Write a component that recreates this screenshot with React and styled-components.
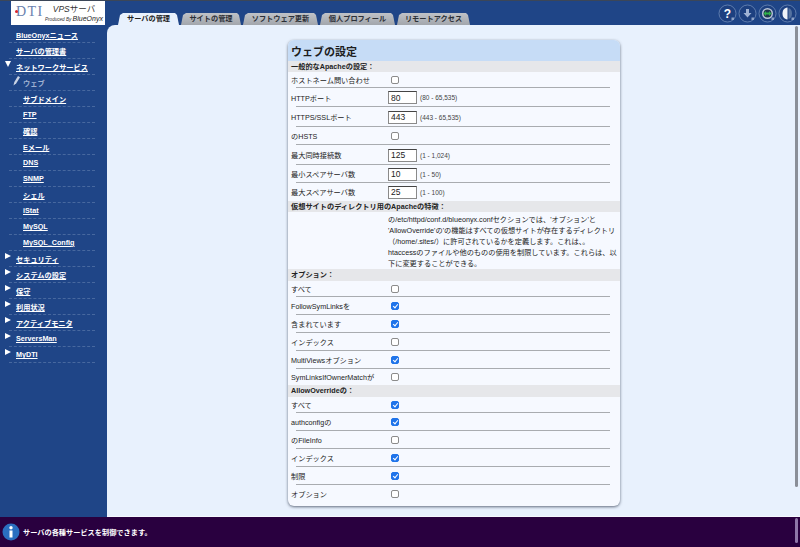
import React from 'react';
import styled, { createGlobalStyle } from 'styled-components';

const GlobalStyle = createGlobalStyle`
	html, body {
		margin: 0;
		padding: 0;
		height: 547px;
		overflow: hidden;
		background: #1f4587;
		font-family: "Liberation Sans", "Noto Sans CJK JP", sans-serif;
	}
`;

const Page = styled.div`
	width: 800px;
	height: 547px;
	display: flex;
	flex-direction: column;
	position: relative;
	overflow: hidden;
`;

const TopBar = styled.header`
	height: 25px;
	flex: none;
	display: flex;
	align-items: flex-end;
	background: #1f4587;
	border-top: 1px solid #3b4658;
	box-sizing: border-box;
`;

const Logo = styled.div`
	width: 94px;
	height: 24px;
	margin-left: 11px;
	background: #fff;
	display: flex;
	align-items: center;
	flex: none;
`;

const LogoMark = styled.div`
	width: 29px;
	margin-left: 5px;
	padding: 0 0 3px 0;
	font-family: "Liberation Serif", serif;
	font-size: 14px;
	line-height: 13px;
	letter-spacing: 1.4px;
	color: #6a81ae;
	position: relative;
	&::before {
		content: '';
		position: absolute;
		left: -1px;
		top: 5px;
		width: 3px;
		height: 3px;
		border-radius: 50%;
		background: #d8232a;
	}
`;

const LogoText = styled.div`
	display: flex;
	flex-direction: column;
	align-items: center;
	color: #333;
	font-style: italic;
`;

const LogoTitle = styled.span`
	font-size: 8.5px;
	line-height: 12px;
	& i {
		font-style: normal;
	}
`;

const LogoSub = styled.span`
	font-size: 4.6px;
	line-height: 8px;
	white-space: nowrap;
	& b {
		font-size: 7px;
		font-weight: normal;
		color: #222;
	}
`;

const Tabs = styled.nav`
	display: flex;
	gap: 2px;
	margin-left: 13px;
	height: 12px;
`;

const Tab = styled.div`
	height: 12px;
	width: ${(p) => p.$w}px;
	clip-path: polygon(0 100%, 2px 2px, 5px 0, calc(100% - 4px) 0, calc(100% - 2px) 2px, 100% 100%);
	background: ${(p) => (p.$active ? '#e8f1fd' : 'linear-gradient(#bfc2c7, #a2a6ac)')};
	color: ${(p) => (p.$active ? '#222' : '#2b2f36')};
	font-size: 7.2px;
	font-weight: bold;
	line-height: 12px;
	text-align: center;
	white-space: nowrap;
`;

const HeadIcons = styled.div`
	display: flex;
	gap: 1px;
	margin-left: auto;
	margin-right: 3px;
	height: 24px;
	align-items: center;
`;

const Middle = styled.div`
	flex: 1;
	display: flex;
	min-height: 0;
`;

const Sidebar = styled.aside`
	width: 107px;
	flex: none;
	background: #1f4587;
	padding-top: 2px;
	box-sizing: border-box;
`;

const NavItem = styled.div`
	height: 16px;
	margin: 0 12px 0 9px;
	padding-left: ${(p) => (p.$sub ? 14 : 7)}px;
	border-bottom: 1px dashed #47689f;
	box-sizing: border-box;
	display: flex;
	align-items: center;
	position: relative;
	font-size: 7.2px;
	font-weight: bold;
	color: ${(p) => (p.$current ? '#9fb2d2' : '#fff')};
	text-decoration: ${(p) => (p.$current ? 'none' : 'underline')};
	white-space: nowrap;
`;

const Arrow = styled.span`
	position: absolute;
	left: -4px;
	top: 2px;
	width: 0;
	height: 0;
	${(p) =>
		p.$open
			? `border-left: 3px solid transparent;
		border-right: 3px solid transparent;
		border-top: 6px solid #fff;`
			: `border-top: 3px solid transparent;
		border-bottom: 3px solid transparent;
		border-left: 6px solid #fff;`}
`;

const Pencil = styled.svg`
	position: absolute;
	left: 4px;
	top: 1px;
`;

const Main = styled.main`
	flex: 1;
	background: #e8f1fd;
	border-radius: 8px 0 0 0;
	padding: 15px 0 0 181px;
	border-bottom: 1px solid #f6f9fe;
	box-sizing: border-box;
	overflow: hidden;
`;

const Card = styled.section`
	width: 332px;
	height: 466px;
	background: #f6f9ff;
	border-radius: 6px;
	box-shadow: 0 1px 3px rgba(40, 50, 70, 0.7);
	overflow: hidden;
	font-size: 7.2px;
	color: #222;
`;

const CardTitle = styled.h1`
	margin: 0;
	height: 21px;
	padding: 3px 0 0 3px;
	box-sizing: border-box;
	background: #c6dcf6;
	font-size: 11px;
	line-height: 19px;
	font-weight: bold;
	color: #1d1d1d;
`;

const SectionHead = styled.div`
	height: ${(p) => p.$h || 12}px;
	padding-left: 3px;
	background: #e6e7ea;
	font-weight: bold;
	font-size: 7.2px;
	line-height: ${(p) => p.$h || 12}px;
`;

const Row = styled.div`
	height: ${(p) => p.$h || 18}px;
	display: flex;
	align-items: center;
	position: relative;
	padding-left: 3px;
	font-size: 7.2px;
	&::after {
		content: '';
		display: ${(p) => (p.$last ? 'none' : 'block')};
		position: absolute;
		left: 8px;
		right: 10px;
		bottom: 0;
		height: 1px;
		background: #a9acb0;
	}
`;

const Label = styled.span`
	width: ${(p) => p.$w || 100}px;
	flex: none;
	white-space: nowrap;
`;

const Check = styled.input.attrs({ type: 'checkbox', readOnly: true })`
	appearance: none;
	margin: 0;
	width: 8px;
	height: 8px;
	border: 1px solid #8b8b8b;
	border-radius: 2px;
	background: #fff;
	position: relative;
	&:checked {
		background: #1f74ea;
		border-color: #1f74ea;
	}
	&:checked::after {
		content: '';
		position: absolute;
		left: 2px;
		top: 0;
		width: 2px;
		height: 4px;
		border: solid #fff;
		border-width: 0 1.5px 1.5px 0;
		transform: rotate(40deg);
	}
`;

const NumInput = styled.input.attrs({ type: 'text', readOnly: true })`
	width: 29px;
	height: 13px;
	box-sizing: border-box;
	border: 1px solid #8a8a8a;
	border-top-color: #444;
	padding: 0 0 0 2px;
	background: #fff;
	font-family: inherit;
	font-size: 8.5px;
	color: #222;
`;

const Range = styled.span`
	margin-left: 3px;
	font-size: 6.5px;
	color: #444;
`;

const Description = styled.div`
	height: 57px;
	padding: 2px 0 0 100px;
	box-sizing: border-box;
	font-size: 7.2px;
	line-height: 11px;
	white-space: nowrap;
`;

const Footer = styled.footer`
	height: 30px;
	flex: none;
	display: flex;
	align-items: center;
	background: #29003f;
	color: #fff;
	font-size: 7.2px;
	font-weight: bold;
	padding-left: 2px;
	gap: 3px;
`;

const ScrollThumb = styled.div`
	position: absolute;
	left: 795px;
	top: ${(p) => p.$top}px;
	width: 3px;
	height: ${(p) => p.$h}px;
	border-radius: 2px;
	background: ${(p) => p.$color};
`;

const nav = [
	{ label: 'BlueOnyxニュース' },
	{ label: 'サーバの管理書' },
	{ label: 'ネットワークサービス', arrow: 'open' },
	{ label: 'ウェブ', sub: true, current: true },
	{ label: 'サブドメイン', sub: true },
	{ label: 'FTP', sub: true },
	{ label: '確認', sub: true },
	{ label: 'Eメール', sub: true },
	{ label: 'DNS', sub: true },
	{ label: 'SNMP', sub: true },
	{ label: 'シェル', sub: true },
	{ label: 'iStat', sub: true },
	{ label: 'MySQL', sub: true },
	{ label: 'MySQL_Config', sub: true },
	{ label: 'セキュリティ', arrow: 'closed' },
	{ label: 'システムの設定', arrow: 'closed' },
	{ label: '保守', arrow: 'closed' },
	{ label: '利用状況', arrow: 'closed' },
	{ label: 'アクティブモニタ', arrow: 'closed' },
	{ label: 'ServersMan', arrow: 'closed' },
	{ label: 'MyDTI', arrow: 'closed' },
];

const tabs = [
	{ label: 'サーバの管理', w: 61, active: true },
	{ label: 'サイトの管理', w: 60 },
	{ label: 'ソフトウェア更新', w: 75 },
	{ label: '個人プロフィール', w: 75 },
	{ label: 'リモートアクセス', w: 73 },
];

const HeadIcon = ({ children }) => (
	<svg width="19" height="19" viewBox="0 0 19 19">
		<circle cx="9.5" cy="9.5" r="8.5" fill="#1d4080" stroke="#6e8ab8" strokeWidth="0.8" />
		{children}
		<rect x="13.5" y="13.5" width="2.5" height="2.5" fill="#8ea2c6" />
	</svg>
);

const CheckRow = ({ label, checked, last, h }) => (
	<Row $last={last} $h={h}>
		<Label>{label}</Label>
		<Check defaultChecked={checked} />
	</Row>
);

const PortRow = ({ label, value, range, h, last }) => (
	<Row $h={h} $last={last}>
		<Label $w={97}>{label}</Label>
		<NumInput defaultValue={value} />
		<Range>{range}</Range>
	</Row>
);

export default function App() {
	return (
		<Page>
			<GlobalStyle />
			<TopBar>
				<Logo>
					<LogoMark>DTI</LogoMark>
					<LogoText>
						<LogoTitle>
							VPS<i>サーバ</i>
						</LogoTitle>
						<LogoSub>
							Produced By <b>BlueOnyx</b>
						</LogoSub>
					</LogoText>
				</Logo>
				<Tabs>
					{tabs.map((t) => (
						<Tab key={t.label} $w={t.w} $active={t.active}>
							{t.label}
						</Tab>
					))}
				</Tabs>
				<HeadIcons>
					<HeadIcon>
						<text x="9.5" y="13.5" fontSize="12" fontWeight="bold" fill="#fff" textAnchor="middle" fontFamily="Liberation Sans">
							?
						</text>
					</HeadIcon>
					<HeadIcon>
						<path d="M8 5h3v4h2.5l-4 4.5-4-4.5H8z" fill="#9fb2d4" />
					</HeadIcon>
					<HeadIcon>
						<circle cx="9.5" cy="9.5" r="5.5" fill="#b9c6da" />
						<circle cx="9.5" cy="9.5" r="4" fill="#20344f" />
						<path d="M5.5 9.5l2.5-2.5v1.5h3V7l2.5 2.5-2.5 2.5v-1.5H8V12z" fill="#2fb04a" />
					</HeadIcon>
					<HeadIcon>
						<path d="M9.5 3.5c-3.5 .3-5 3-5 6s1.5 5.7 5 6z" fill="#eef2f9" />
						<path d="M10.5 4c2.5 .8 3.5 3 3.5 5.5s-1 4.7-3.5 5.5z" fill="#54719f" />
					</HeadIcon>
				</HeadIcons>
			</TopBar>
			<Middle>
				<Sidebar>
					{nav.map((n) => (
						<NavItem key={n.label} $sub={n.sub} $current={n.current}>
							{n.arrow && <Arrow $open={n.arrow === 'open'} />}
							{n.current && (
								<Pencil width="8" height="10" viewBox="0 0 8 10">
									<path d="M.5 9.5l.8-3.500 3.700-6 2 1.200-3.700 6z" fill="#c8d2e4" />
								</Pencil>
							)}
							{n.label}
						</NavItem>
					))}
				</Sidebar>
				<Main>
					<Card>
						<CardTitle>ウェブの設定</CardTitle>
						<SectionHead $h={11}>一般的なApacheの設定：</SectionHead>
						<CheckRow label="ホストネーム問い合わせ" h={16} />
						<PortRow label="HTTPポート" value="80" range="(80 - 65,535)" h={19} />
						<PortRow label="HTTPS/SSLポート" value="443" range="(443 - 65,535)" h={20} />
						<CheckRow label="のHSTS" />
						<PortRow label="最大同時接続数" value="125" range="(1 - 1,024)" h={20} />
						<PortRow label="最小スペアサーバ数" value="10" range="(1 - 50)" />
						<PortRow label="最大スペアサーバ数" value="25" range="(1 - 100)" last />
						<SectionHead $h={11}>仮想サイトのディレクトリ用のApacheの特徴：</SectionHead>
						<Description>
							の/etc/httpd/conf.d/blueonyx.confセクションでは、'オプション'と
							<br />
							'AllowOverride'の'の機能はすべての仮想サイトが存在するディレクトリ
							<br />
							（/home/.sites/）に許可されているかを定義します。これは、。
							<br />
							htaccessのファイルや他のものの使用を制限しています。これらは、以
							<br />
							下に変更することができる。
						</Description>
						<SectionHead>オプション：</SectionHead>
						<CheckRow label="すべて" h={16} />
						<CheckRow label="FollowSymLinksを" checked />
						<CheckRow label="含まれています" checked />
						<CheckRow label="インデックス" />
						<CheckRow label="MultiViewsオプション" checked />
						<CheckRow label="SymLinksIfOwnerMatchが" last h={16} />
						<SectionHead>AllowOverrideの：</SectionHead>
						<CheckRow label="すべて" checked h={16} />
						<CheckRow label="authconfigの" checked />
						<CheckRow label="のFileInfo" />
						<CheckRow label="インデックス" checked />
						<CheckRow label="制限" checked />
						<CheckRow label="オプション" last />
					</Card>
				</Main>
			</Middle>
			<Footer>
				<svg width="18" height="18" viewBox="0 0 18 18">
					<circle cx="9" cy="9" r="8.5" fill="#2a6fc0" />
					<circle cx="9" cy="4.8" r="1.7" fill="#fff" />
					<rect x="7.5" y="7.5" width="3" height="7" fill="#fff" />
				</svg>
				サーバの各種サービスを制御できます。
			</Footer>
			<ScrollThumb $top={26} $h={461} $color="#8a8f98" />
			<ScrollThumb $top={518} $h={25} $color="#8f76a8" />
		</Page>
	);
}
